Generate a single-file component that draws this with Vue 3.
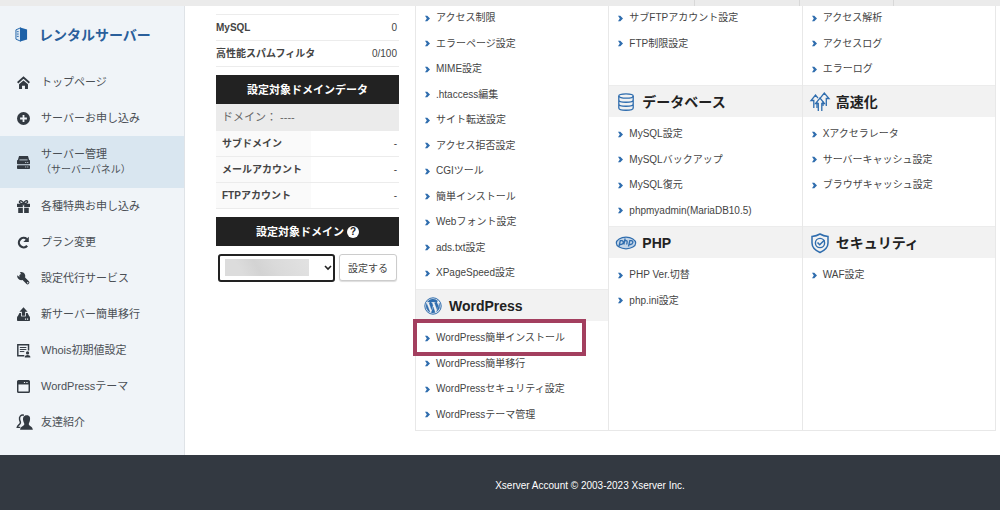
<script setup>
import { ref } from 'vue'

const domain = ref('')

const tabs = ['wide', 'middle', 'narrow', 'rest']

const nav = [
  { icon: 'home', label: 'トップページ' },
  { icon: 'plus', label: 'サーバーお申し込み' },
  { icon: 'server', label: 'サーバー管理', sub: '（サーバーパネル）', active: true },
  { icon: 'gift', label: '各種特典お申し込み' },
  { icon: 'reload', label: 'プラン変更' },
  { icon: 'wrench', label: '設定代行サービス' },
  { icon: 'upload', label: '新サーバー簡単移行' },
  { icon: 'whois', label: 'Whois初期値設定' },
  { icon: 'window', label: 'WordPressテーマ' },
  { icon: 'friends', label: '友達紹介' },
]

const usage = [
  { name: 'MySQL', value: '0' },
  { name: '高性能スパムフィルタ', value: '0/100' },
]

const domainRows = ['サブドメイン', 'メールアカウント', 'FTPアカウント']

const columns = [
  [
    {
      links: [
        'アクセス制限', 'エラーページ設定', 'MIME設定', '.htaccess編集', 'サイト転送設定',
        'アクセス拒否設定', 'CGIツール', '簡単インストール', 'Webフォント設定',
        'ads.txt設定', 'XPageSpeed設定',
      ],
    },
    {
      title: 'WordPress',
      icon: 'wordpress',
      marked: 'WordPress簡単インストール',
      links: [
        'WordPress簡単インストール', 'WordPress簡単移行',
        'WordPressセキュリティ設定', 'WordPressテーマ管理',
      ],
    },
  ],
  [
    { links: ['サブFTPアカウント設定', 'FTP制限設定'] },
    {
      title: 'データベース',
      icon: 'database',
      links: ['MySQL設定', 'MySQLバックアップ', 'MySQL復元', 'phpmyadmin(MariaDB10.5)'],
    },
    { title: 'PHP', icon: 'php', links: ['PHP Ver.切替', 'php.ini設定'] },
  ],
  [
    { links: ['アクセス解析', 'アクセスログ', 'エラーログ'] },
    {
      title: '高速化',
      icon: 'speed',
      links: ['Xアクセラレータ', 'サーバーキャッシュ設定', 'ブラウザキャッシュ設定'],
    },
    { title: 'セキュリティ', icon: 'shield', links: ['WAF設定'] },
  ],
]
</script>

<template>
  <div class="page">
    <header class="topbar">
      <span v-for="t in tabs" :key="t" class="tab" :class="t"></span>
    </header>

    <div class="body">
      <aside class="sidebar">
        <h1 class="brand">
          <svg class="brand-icon" viewBox="0 0 14 16" aria-hidden="true">
            <path d="M1 3 6 .8v14.4L1 13z" fill="#dfeaf5" stroke="#1d61a8" />
            <path d="M5.500.5 13 2.500v11l-7.500 2z" fill="#1d61a8" />
            <path d="M2 5h2M2 7.500h2M2 10h2" stroke="#1d61a8" />
          </svg>
          レンタルサーバー
        </h1>
        <nav>
          <a v-for="n in nav" :key="n.label" href="#" class="nav-item" :class="{ active: n.active }">
            <svg class="nav-icon" viewBox="0 0 16 16" aria-hidden="true">
              <template v-if="n.icon === 'home'">
                <path d="M.8 8.300 8 1.800l7.200 6.500" fill="none" stroke="currentColor" stroke-width="2.200" />
                <path d="M2.500 10.300 8 5.500l5.500 4.800V16H9.800v-4H6.200v4H2.500z" fill="currentColor" />
              </template>
              <template v-else-if="n.icon === 'plus'">
                <circle cx="8" cy="8" r="8" fill="currentColor" />
                <path d="M8 3.800v8.400M3.800 8h8.400" stroke="#f0f4f8" stroke-width="2.200" />
              </template>
              <template v-else-if="n.icon === 'server'">
                <path d="M2.500 0h11L16 8.500H0z" fill="currentColor" />
                <rect y="5" width="16" height="5.300" rx="1" fill="currentColor" />
                <rect y="11.300" width="16" height="4.700" rx="1" fill="currentColor" />
                <path d="M10 8h1.400M12.500 8h1.400M10 13.500h1.400M12.500 13.500h1.400M3 4.800h10" stroke="#d9e6f0" stroke-width="1" />
              </template>
              <template v-else-if="n.icon === 'gift'">
                <path d="M0 4.500h7.200v4H0zM8.800 4.500H16v4H8.800zM1.500 9.500h5.700V16H1.500zM8.800 9.500h5.700V16H8.800z" fill="currentColor" />
                <path d="M8 4.500C5 4.500 2.500 3.500 3 1.800S7 1 8 4.500C9 1 12.500 0 13 1.800S11 4.500 8 4.500z" fill="none" stroke="currentColor" stroke-width="1.700" />
              </template>
              <template v-else-if="n.icon === 'reload'">
                <path d="M12.500 12A5.800 5.800 0 1 1 12 3.800" fill="none" stroke="currentColor" stroke-width="2.800" />
                <path d="M14.500.8v6.700H7.800z" fill="currentColor" />
              </template>
              <template v-else-if="n.icon === 'wrench'">
                <path d="M5 5l8 8" stroke="currentColor" stroke-width="4.500" stroke-linecap="round" />
                <path d="M3.500.3A5 5 0 1 1 .3 4L3.500 6.500 6 4z" fill="currentColor" />
                <circle cx="13.200" cy="13.200" r=".9" fill="#f0f4f8" />
              </template>
              <template v-else-if="n.icon === 'upload'">
                <path d="M8-1l5 5.500h-3V9.500H6V4.500H3z" fill="currentColor" />
                <path d="M3 6h2v4.800h6V6h2l2.500 5H.5z" fill="currentColor" />
                <rect y="10.500" width="16" height="5.500" rx="1" fill="currentColor" />
                <path d="M9.800 13.700h1.400M12.300 13.700h1.400" stroke="#f0f4f8" stroke-width="1.300" />
              </template>
              <template v-else-if="n.icon === 'whois'">
                <path d="M9 14.500H1V1h13.200v7" fill="none" stroke="currentColor" stroke-width="1.800" />
                <path d="M3.500 4.300h8M3.500 6.800h8M3.500 9.300h5.500" stroke="currentColor" stroke-width="1.200" />
                <circle cx="13" cy="11" r="2" fill="currentColor" />
                <path d="M9.500 16.500c0-4 7-4 7 0z" fill="currentColor" />
              </template>
              <template v-else-if="n.icon === 'window'">
                <rect x=".9" y=".9" width="14.200" height="14.200" rx="1" fill="none" stroke="currentColor" stroke-width="1.800" />
                <path d="M1 1h14v4.500H1z" fill="currentColor" />
                <path d="M8.500 3h1.500M11.500 3H13" stroke="#f0f4f8" stroke-width="1.300" />
              </template>
              <template v-else>
                <path d="M8.500-1C4.500-1.800 2.500 1 3.200 4.500c.3 1.700 1 2.300 1 4C3.500 11 .8 11 .3 14H4" fill="none" stroke="currentColor" stroke-width="1.800" />
                <path d="M12-1C8-1 7 2 7.600 5.500c.2 2 1.400 2.800 1.400 4.500C8.500 12.500 4 12.500 3.800 17h15.700c-.2-4.500-4.500-4.500-5-7 0-1.700 1.200-2.500 1.400-4.500C16.500 2 16-1 12-1z" fill="currentColor" />
              </template>
            </svg>
            <span>{{ n.label }}<small v-if="n.sub">{{ n.sub }}</small></span>
          </a>
        </nav>
      </aside>

      <main class="main">
        <section class="status">
          <table class="usage">
            <tbody>
              <tr v-for="u in usage" :key="u.name">
                <th scope="row">{{ u.name }}</th>
                <td>{{ u.value }}</td>
              </tr>
            </tbody>
          </table>

          <h2 class="bar">設定対象ドメインデータ</h2>
          <p class="current">ドメイン： ----</p>
          <table class="domain-data">
            <tbody>
              <tr v-for="r in domainRows" :key="r">
                <th scope="row">{{ r }}</th>
                <td>-</td>
              </tr>
            </tbody>
          </table>

          <h2 class="bar">
            <label for="domain">設定対象ドメイン</label>
            <span class="help">?</span>
          </h2>
          <form class="picker" @submit.prevent>
            <div class="select">
              <select id="domain" v-model="domain">
                <option value=""></option>
              </select>
              <span class="mask"></span>
              <svg class="chevron" viewBox="0 0 8 6" aria-hidden="true">
                <path d="M1 1l3 3 3-3" fill="none" stroke="#222" stroke-width="1.600" />
              </svg>
            </div>
            <button type="submit">設定する</button>
          </form>
        </section>

        <div class="menu">
          <div v-for="(col, c) in columns" :key="c" class="column">
            <section v-for="(s, i) in col" :key="i" class="group">
              <h2 v-if="s.title" class="group-title">
                <svg class="group-icon" viewBox="0 0 22 22" fill="none" stroke="#2f6dae" aria-hidden="true">
                  <template v-if="s.icon === 'wordpress'">
                    <circle cx="11" cy="11" r="8.200" stroke-width="1" />
                    <path d="M4.600 8.200 8.200 17.400A7 7 0 0 1 4.600 8.200zM5.300 7A7 7 0 0 1 15.800 6c-1.300.6-1 2 0 3.300 1 1.700-.2 3.400-.8 5.200L12.500 7.800h1V7H9v.8h1l1 2.700-1.500 4.300L7 7.800h1V7zM11.200 12l2 5.500a7 7 0 0 1-4 .2zM17.200 8a7 7 0 0 1-2.800 9l2.200-6c.4-1.200.6-2 .6-3z" fill="#2f6dae" stroke="#2f6dae" stroke-width=".3" />
                  </template>
                  <template v-else-if="s.icon === 'database'">
                    <ellipse cx="11" cy="5" rx="7.200" ry="2.200" stroke-width="1.300" />
                    <path d="M3.800 5v12c0 3 14.400 3 14.400 0V5M3.800 9c0 3 14.400 3 14.400 0M3.800 13c0 3 14.400 3 14.400 0" stroke-width="1.300" />
                  </template>
                  <template v-else-if="s.icon === 'php'">
                    <ellipse cx="11" cy="11" rx="9.700" ry="5.800" stroke-width="1.200" fill="#c3d5e8" />
                    <path d="M4 14.500l1.300-5.800h1.500c2.500 0 1.800 3.800-1 3.800H4.700M10.200 6.500 8.800 12.500M9.700 8.900c2-.5 2.800 0 2.400 1.500l-.4 2.100M13.500 14.500l1.300-5.800h1.500c2.500 0 1.800 3.800-1 3.800h-1.100" stroke-width="1.300" />
                  </template>
                  <template v-else-if="s.icon === 'speed'">
                    <path d="M4.800 17V9.500H2L6.500 4 9 7.200M8 11.300V17M17.300 15V7.500H20L15.300 2 11 7.300M14 10.500V15" stroke-width="1.300" />
                    <path d="M9.300 20v-7.500H6.500L11 7l4.500 5.500h-2.700V20" stroke-width="1.300" />
                  </template>
                  <template v-else>
                    <path d="M11 2c2.500 1.500 5 2.200 8 2.500V11c0 4.500-3.500 7.500-8 9.500-4.500-2-8-5-8-9.500V4.500C6 4.200 8.500 3.500 11 2z" stroke-width="1.500" />
                    <circle cx="11" cy="11" r="4.600" stroke-width="1.400" />
                    <path d="M8.500 10.500l2.200 2.300L15.500 8" stroke-width="1.500" />
                  </template>
                </svg>
                {{ s.title }}
              </h2>
              <ul>
                <li v-for="l in s.links" :key="l" :class="{ marked: l === s.marked }">
                  <a href="#">
                    <svg class="arrow" viewBox="0 0 5 7" aria-hidden="true">
                      <path d="M0 .8h2.300L5 3.500 2.300 6.200H0l1.800-2.700z" fill="#2f6dae" />
                    </svg>
                    {{ l }}
                  </a>
                </li>
              </ul>
            </section>
          </div>
        </div>
      </main>
    </div>

    <footer class="footer">Xserver Account © 2003-2023 Xserver Inc.</footer>
  </div>
</template>

<style>
body {
  margin: 0;
  background: #fff;
}
</style>

<style scoped>
.page {
  font-family: "Liberation Sans", "Noto Sans CJK JP", sans-serif;
  font-size: 10px;
  color: #444;
}
h1, h2, p, ul {
  margin: 0;
  padding: 0;
}
ul {
  list-style: none;
}
a {
  color: inherit;
  text-decoration: none;
}

.topbar {
  position: sticky;
  top: 0;
  z-index: 1;
  display: flex;
  height: 6px;
  margin-bottom: -1px;
  background: #ebebeb;
}
.tab {
  box-sizing: border-box;
  border-right: 1px solid #d8d8d8;
}
.tab.wide { flex: 696; }
.tab.middle { flex: 104; }
.tab.narrow { flex: 94; }
.tab.rest { flex: 106; border: 0; }

.body {
  display: flex;
}

.sidebar {
  box-sizing: border-box;
  flex: none;
  width: 185px;
  background: #f0f4f8;
  border-right: 1px solid #dfe3e7;
}
.brand {
  display: flex;
  align-items: center;
  gap: 11px;
  height: 59px;
  padding-left: 15px;
  font-size: 14px;
  line-height: 20px;
  color: #2a5f9b;
}
.brand-icon {
  width: 13px;
  height: 15px;
}
.nav-item {
  display: flex;
  align-items: center;
  gap: 11px;
  height: 36px;
  padding-left: 17px;
  font-size: 11px;
  line-height: 16px;
  color: #4a4f55;
}
.nav-item.active {
  height: 52px;
  background: #d9e6f0;
}
.nav-item small {
  display: block;
  font-size: 10px;
}
.nav-icon {
  flex: none;
  width: 13px;
  height: 13px;
  overflow: visible;
  color: #333a42;
}

.main {
  display: flex;
  flex: 1;
  align-items: flex-start;
  gap: 16px;
  padding: 0 4px 24px 31px;
}

.status {
  flex: none;
  width: 183px;
  padding-top: 9px;
}
table {
  width: 100%;
  border-collapse: separate;
  border-spacing: 0;
}
th, td {
  height: 25px;
  padding: 0;
  border-bottom: 1px solid #ececec;
  line-height: 16px;
}
th {
  text-align: left;
}
td {
  padding-right: 2px;
  text-align: right;
}
.usage {
  border-top: 1px solid #ececec;
}
.domain-data th {
  width: 89px;
  padding-left: 6px;
  background: #fafafa;
}
.bar {
  display: flex;
  align-items: center;
  justify-content: center;
  gap: 3px;
  height: 29px;
  margin-top: 8px;
  background: #222;
  font-size: 11px;
  line-height: 16px;
  color: #fff;
}
.help {
  width: 12px;
  height: 12px;
  border-radius: 50%;
  background: #fff;
  font-size: 10px;
  line-height: 12px;
  text-align: center;
  color: #222;
}
.current {
  padding-left: 6px;
  background: #ebebeb;
  font-size: 11px;
  line-height: 27px;
  color: #666;
}
.picker {
  display: flex;
  gap: 4px;
  margin: 8px 2px 0;
}
.select {
  position: relative;
  flex: 1;
}
select {
  box-sizing: border-box;
  display: block;
  width: 100%;
  height: 28px;
  border: 2px solid #222;
  border-radius: 3px;
  background: #fff;
  appearance: none;
}
.mask {
  position: absolute;
  inset: 5px 26px 6px 7px;
  background: linear-gradient(60deg, #dcdcdc 20%, #d3d3d3 40%, #dadada 60%, #e2e2e2);
  pointer-events: none;
}
.chevron {
  position: absolute;
  top: 11px;
  right: 3px;
  width: 8px;
  height: 6px;
  pointer-events: none;
}
button {
  width: 58px;
  height: 27px;
  padding: 0;
  border: 1px solid #ccc;
  border-radius: 3px;
  background: #fff;
  box-shadow: 0 1px 1px #ddd;
  font: inherit;
  color: #444;
}

.menu {
  display: grid;
  flex: 1;
  grid-template-columns: repeat(3, 1fr);
  grid-template-rows: auto auto 1fr;
  border: solid #e8e8e8;
  border-width: 0 1px 1px 0;
}
.column {
  display: grid;
  grid-row: 1 / 4;
  grid-template-rows: subgrid;
  border-left: 1px solid #e8e8e8;
}
/* The long first column keeps its own rhythm beside the aligned pair. */
.column:first-child {
  display: block;
}
.group-title {
  box-sizing: border-box;
  display: flex;
  align-items: center;
  gap: 5px;
  height: 32px;
  padding-left: 6px;
  border-top: 1px solid #ececec;
  background: #f2f2f2;
  font-size: 14px;
  line-height: 20px;
  color: #222;
}
.group-icon {
  width: 22px;
  height: 22px;
}
.group ul {
  padding: 4px 0 3px;
}
.group:first-child ul {
  padding-top: 0;
}
.group li {
  position: relative;
  line-height: 26px;
}
.group li:nth-child(even) {
  line-height: 25px;
}
.group li a {
  display: flex;
  align-items: center;
  gap: 6px;
  padding-left: 9px;
  white-space: nowrap;
}
.arrow {
  width: 5px;
  height: 7px;
}
.marked::after {
  content: "";
  position: absolute;
  inset: -6px 22px -5px -3px;
  border: 4px solid #a33f5f;
  pointer-events: none;
}

.footer {
  padding: 24px 5px 17px 185px;
  background: #333941;
  line-height: 14px;
  text-align: center;
  color: #fff;
}
</style>
